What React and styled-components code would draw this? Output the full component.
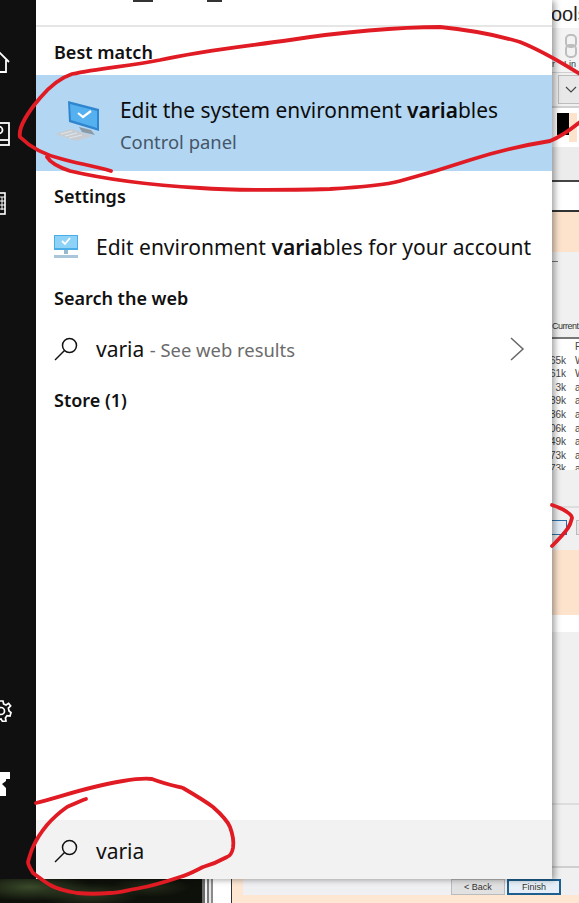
import React from 'react'
import styled, { createGlobalStyle } from 'styled-components'

const GlobalStyle = createGlobalStyle`
  html, body {
    margin: 0;
    padding: 0;
    background: #fff;
    overflow: hidden;
  }

  * {
    box-sizing: border-box;
  }
`

const Screen = styled.div`
  position: relative;
  width: 579px;
  height: 903px;
  overflow: hidden;
  font-family: 'Noto Sans', 'Open Sans', sans-serif;
  display: flex;
  flex-direction: column;
`

const Main = styled.div`
  display: flex;
  height: 879px;
`

const Sidebar = styled.nav`
  width: 36px;
  flex: none;
  background: #101010;
  display: flex;
  flex-direction: column;
  overflow: hidden;
  padding-top: 50px;
`

const RailIcon = styled.svg`
  display: block;
  margin-left: ${(props) => props.$left || 0}px;
  margin-top: ${(props) => props.$top || 0}px;
  flex: none;
`

const Panel = styled.section`
  width: 516px;
  flex: none;
  background: #fff;
  display: flex;
  flex-direction: column;
  box-shadow: 3px 1px 6px rgba(0, 0, 0, 0.35);
  z-index: 1;
`

const TopStrip = styled.div`
  height: 27px;
  flex: none;
  border-bottom: 2px solid #e6e6e6;
  display: flex;
  align-items: flex-start;
  padding-left: 97px;
  gap: 54px;
  overflow: hidden;
`

const TabStub = styled.span`
  display: block;
  width: ${(props) => props.$width}px;
  height: 2px;
  background: #333;
`

const Results = styled.div`
  flex: 1;
  display: flex;
  flex-direction: column;
`

const Heading = styled.h2`
  margin: 0;
  height: ${(props) => props.$height}px;
  padding: ${(props) => props.$pad}px 0 0 18px;
  font-size: 18px;
  line-height: 24px;
  font-weight: 600;
  color: #111;
`

const BestRow = styled.div`
  height: 96px;
  background: #b3d6f2;
  display: flex;
  align-items: center;
  padding-left: 18px;
  gap: 10px;
`

const BestText = styled.div`
  display: flex;
  flex-direction: column;
  gap: 5px;
  padding-top: 2px;
`

const BestTitle = styled.div`
  font-size: 20.9px;
  line-height: 30px;
  color: #0c0c0c;
  white-space: nowrap;
`

const BestSub = styled.div`
  font-size: 18.4px;
  line-height: 24px;
  color: #44566a;
`

const Row = styled.div`
  height: ${(props) => props.$height}px;
  display: flex;
  align-items: center;
  padding: 0 27px 0 18px;
  gap: 18px;
`

const RowLabel = styled.div`
  flex: 1;
  font-size: 21px;
  color: #111;
  white-space: nowrap;
`

const Hint = styled.span`
  font-size: 18.4px;
  color: #6b6b6b;
`

const SearchBox = styled.div`
  height: 59px;
  flex: none;
  background: #f2f2f2;
  display: flex;
  align-items: center;
  padding: 2px 0 0 18px;
  gap: 18px;
`

const SearchText = styled.span`
  font-size: 21px;
  color: #111;
`

const Backdrop = styled.aside`
  width: 27px;
  flex: none;
  display: flex;
  flex-direction: column;
  overflow: hidden;
  background: #f0f0f0;
  font-family: 'Liberation Sans', sans-serif;
`

const Band = styled.div`
  height: ${(props) => props.$height}px;
  flex: none;
  background: ${(props) => props.$bg || 'transparent'};
  border-bottom: ${(props) => (props.$line ? `${props.$weight || 2}px solid ${props.$line}` : 'none')};
  display: flex;
  align-items: ${(props) => props.$align || 'center'};
  overflow: hidden;
`

const WindowTitle = styled.span`
  font-size: 20px;
  color: #222;
  margin-left: -1px;
  white-space: nowrap;
`

const ToolGroup = styled.div`
  width: 27px;
  height: 100%;
  display: flex;
  flex-direction: column;
  padding-top: 6px;
`

const ChainIcon = styled.svg`
  display: block;
  margin-left: 12px;
  flex: none;
`

const ToolLabels = styled.div`
  display: flex;
  gap: 9px;
  margin-top: 1px;
  font-size: 9px;
  line-height: 11px;
  color: #333;
  white-space: nowrap;
`

const ChevronBox = styled.div`
  width: 30px;
  height: 29px;
  margin-left: 6px;
  flex: none;
  background: #e8e8e8;
  border: 1px solid #bdbdbd;
  display: flex;
  align-items: center;
  padding-left: 6px;
`

const Swatch = styled.div`
  width: 12px;
  height: 22px;
  margin: 5px 0 0 5px;
  flex: none;
  background: #000;
`

const SwatchTail = styled.div`
  width: 8px;
  height: 29px;
  margin-top: 5px;
  flex: none;
  background: #fde3cc;
`

const Dash = styled.span`
  display: block;
  width: 6px;
  height: 1px;
  margin-top: 9px;
  background: #777;
`

const ColumnHeader = styled.div`
  height: 21px;
  font-size: 9px;
  line-height: 16px;
  letter-spacing: -0.5px;
  color: #333;
  border-bottom: 2px solid #777;
  white-space: nowrap;
`

const Table = styled.div`
  background: #fff;
  flex: none;
  height: 131px;
  padding-top: 1px;
  overflow: hidden;
`

const TableRow = styled.div`
  height: 13.6px;
  display: grid;
  grid-template-columns: 14px 13px;
  font-size: 10px;
  line-height: 13.6px;
  color: #444;
`

const Size = styled.span`
  display: flex;
  justify-content: flex-end;
  white-space: nowrap;
`

const Cell = styled.span`
  padding-left: 9px;
`

const SelectedButton = styled.div`
  width: 15px;
  height: 15px;
  margin-top: 12px;
  flex: none;
  background: #e3eef8;
  border: 1px solid #2a6ea6;
  border-left: none;
`

const SpareButton = styled.div`
  width: 6px;
  height: 15px;
  margin: 12px 0 0 9px;
  flex: none;
  background: #e4e4e4;
  border: 1px solid #bbb;
`

const Taskstrip = styled.footer`
  height: 24px;
  flex: none;
  display: flex;
`

const Wallpaper = styled.div`
  width: 202px;
  flex: none;
  background:
    radial-gradient(ellipse 60px 14px at 30px 8px, #3a4a2a, transparent),
    radial-gradient(ellipse 50px 12px at 90px 16px, #2c3620, transparent),
    radial-gradient(ellipse 40px 10px at 150px 8px, #232a19, transparent),
    #0e110a;
`

const Rails = styled.div`
  width: 30px;
  flex: none;
  background: linear-gradient(
    90deg,
    #6b6b6b 0 3px,
    #f4f4f4 3px 5px,
    #7a7a7a 5px 7px,
    #e6e6e6 7px 9px,
    #8a8a8a 9px 11px,
    #fff 11px 29px,
    #333 29px
  );
`

const Wizard = styled.div`
  flex: 1;
  background: #fde6d2;
  padding: 0 0 8px 11px;
`

const WizardBar = styled.div`
  height: 16px;
  background: #f0f0f2;
  display: flex;
  align-items: center;
  padding-left: 208px;
  gap: 2px;
  font-family: 'Liberation Sans', sans-serif;
  font-size: 9px;
  color: #333;
`

const WizardButton = styled.div`
  width: ${(props) => props.$width}px;
  height: 16px;
  flex: none;
  display: flex;
  align-items: center;
  justify-content: center;
  background: ${(props) => (props.$primary ? '#e6eff7' : '#e1e1e1')};
  border: ${(props) => (props.$primary ? '2px solid #1d5f8f' : '1px solid #bbb')};
`

const Scribble = styled.svg`
  position: absolute;
  inset: 0;
  z-index: 3;
  pointer-events: none;
`

const Match = styled.strong`
  font-weight: 600;
`

const Magnifier = () => (
  <svg width="24" height="24" viewBox="0 0 24 24" fill="none" stroke="#111" strokeWidth="1.5" style={{ flex: 'none' }}>
    <circle cx="15.5" cy="8.5" r="7" />
    <path d="M10.5 13.5 1 23" />
  </svg>
)

const SystemIcon = () => (
  <svg width="56" height="46" viewBox="0 0 56 46" style={{ flex: 'none' }}>
    <path d="M14 1 45 9V31L15 22Z" fill="#2f86cf" />
    <path d="M16 4 43 11V28L17 20Z" fill="#55b0f0" />
    <path d="M24 13 29 17 37 11" fill="none" stroke="#fff" strokeWidth="2.2" />
    <path d="M25 27 37 30 41 35 28 32Z" fill="#8c9aa6" />
    <path d="M1 34 17 29 39 36 22 41Z" fill="#c6ccd1" />
    <path d="M7 34 18 31M11 36 23 33M15 38 28 35" stroke="#dfe3e6" strokeWidth="1.2" />
  </svg>
)

const SettingsIcon = () => (
  <svg width="24" height="24" viewBox="0 0 24 24" style={{ flex: 'none' }}>
    <rect x="0" y="0" width="24" height="15" fill="#49aee8" />
    <rect x="1" y="1" width="22" height="12" fill="#8ed3f7" />
    <path d="M8 6 11 9 16 3" fill="none" stroke="#fff" strokeWidth="1.8" />
    <rect x="10" y="15" width="4" height="4" fill="#9ab8cc" />
    <rect x="0" y="20" width="24" height="3" fill="#a9c6da" />
  </svg>
)

const rows = [
  { size: '', cell: 'F' },
  { size: '65k', cell: 'W' },
  { size: '61k', cell: 'W' },
  { size: '3k', cell: 'a' },
  { size: '89k', cell: 'a' },
  { size: '36k', cell: 'a' },
  { size: '06k', cell: 'a' },
  { size: '49k', cell: 'a' },
  { size: '73k', cell: 'a' },
  { size: '73k', cell: 'a' }
]

const App = () => (
  <Screen>
    <GlobalStyle />
    <Main>
      <Sidebar>
        <RailIcon $left={-10} width="20" height="24" viewBox="0 0 20 24" fill="none" stroke="#fff" strokeWidth="1.8">
          <path d="M1 12 10 3 19 12M16 10V22H4V10" />
        </RailIcon>
        <RailIcon $left={-12} $top={48} width="22" height="24" viewBox="0 0 22 24" fill="none" stroke="#fff" strokeWidth="1.8">
          <rect x="1" y="1" width="20" height="22" />
          <circle cx="11" cy="8" r="3.5" />
          <path d="M1 18H21" />
        </RailIcon>
        <RailIcon $left={-10} $top={46} width="16" height="24" viewBox="0 0 16 24" fill="none" stroke="#fff" strokeWidth="1.6">
          <rect x="1" y="1" width="14" height="21" />
          <path d="M4 5H15M4 9H15M4 13H15M4 17H15M8 5V18M12 5V18" strokeWidth="1" />
        </RailIcon>
        <RailIcon $left={-10} $top={484} width="22" height="22" viewBox="0 0 22 22" fill="none" stroke="#fff" strokeWidth="1.7">
          <circle cx="11" cy="11" r="3.5" />
          <path d="M9 1H13L13.6 4 16 5 18.6 3.4 20.6 6 18.4 8 19 11 21 12.5 20 16 17 15.6 15.4 18 16 21 12.5 21.4 11 19 8.5 19.4 6 21 3 19 4.4 16 3 13.6 1 13 1 9 4 8.4 5 6 3.4 3.4 6 1.4 8 3.6Z" />
        </RailIcon>
        <RailIcon $left={-8} $top={50} width="18" height="24" viewBox="0 0 18 24" fill="#fff">
          <path d="M0 0H18V7H14V9L10 12 14 16V24H6V18L0 14Z" />
        </RailIcon>
      </Sidebar>
      <Panel>
        <TopStrip>
          <TabStub $width={20} />
          <TabStub $width={15} />
        </TopStrip>
        <Results>
          <Heading $height={48} $pad={13}>Best match</Heading>
          <BestRow>
            <SystemIcon />
            <BestText>
              <BestTitle>Edit the system environment <Match>varia</Match>bles</BestTitle>
              <BestSub>Control panel</BestSub>
            </BestText>
          </BestRow>
          <Heading $height={50} $pad={13}>Settings</Heading>
          <Row $height={52}>
            <SettingsIcon />
            <RowLabel>Edit environment <Match>varia</Match>bles for your account</RowLabel>
          </Row>
          <Heading $height={50} $pad={13}>Search the web</Heading>
          <Row $height={52}>
            <Magnifier />
            <RowLabel>varia <Hint>- See web results</Hint></RowLabel>
            <svg width="16" height="26" viewBox="0 0 16 26" fill="none" stroke="#666" strokeWidth="1.5">
              <path d="M2 2 14 13 2 24" />
            </svg>
          </Row>
          <Heading $height={50} $pad={13}>Store (1)</Heading>
        </Results>
        <SearchBox>
          <Magnifier />
          <SearchText>varia</SearchText>
        </SearchBox>
      </Panel>
      <Backdrop>
        <Band $height={28} $bg="#fff"><WindowTitle>ools</WindowTitle></Band>
        <Band $height={45} $bg="#f3f3f3" $line="#d0d0d0" $weight={1}>
          <ToolGroup>
            <ChainIcon width="14" height="24" viewBox="0 0 14 24" fill="none" stroke="#bdbdbd" strokeWidth="2">
              <rect x="2" y="1" width="10" height="12" rx="4" />
              <rect x="2" y="11" width="10" height="12" rx="4" />
            </ChainIcon>
            <ToolLabels>
              <span>r</span>
              <span>Lin</span>
            </ToolLabels>
          </ToolGroup>
        </Band>
        <Band $height={35} $bg="#f0f0f0" $line="#d0d0d0">
          <ChevronBox>
            <svg width="12" height="8" viewBox="0 0 12 8" fill="none" stroke="#444" strokeWidth="1.1">
              <path d="M1 1 6 6 11 1" />
            </svg>
          </ChevronBox>
        </Band>
        <Band $height={39} $bg="#fff" $align="flex-start">
          <Swatch />
          <SwatchTail />
        </Band>
        <Band $height={35} $bg="#ececec" $line="#444" />
        <Band $height={30} $bg="#fff" $line="#333" />
        <Band $height={40} $bg="#fde3cc" />
        <Band $height={66} $bg="#f0f0f0" $align="flex-start"><Dash /></Band>
        <ColumnHeader>Current</ColumnHeader>
        <Table>
          {rows.map((row, index) => (
            <TableRow key={index}>
              <Size>{row.size}</Size>
              <Cell>{row.cell}</Cell>
            </TableRow>
          ))}
        </Table>
        <Band $height={38} $bg="#f0f0f0" $line="#ddd" />
        <Band $height={42} $bg="#f0f0f0" $align="flex-start">
          <SelectedButton />
          <SpareButton />
        </Band>
        <Band $height={65} $bg="#fde3cc" />
        <Band $height={17} $bg="#fff" />
        <Band $height={173} $bg="#f0f0f0" $line="#ddd" />
        <Band $height={63} $bg="#f0f0f0" $line="#cfcfcf" />
        <Band $height={11} $bg="#f0f0f0" />
      </Backdrop>
    </Main>
    <Taskstrip>
      <Wallpaper />
      <Rails />
      <Wizard>
        <WizardBar>
          <WizardButton $width={54}>&lt; Back</WizardButton>
          <WizardButton $width={54} $primary>Finish</WizardButton>
        </WizardBar>
      </Wizard>
    </Taskstrip>
    <Scribble width="579" height="903" viewBox="0 0 579 903" fill="none" stroke="#e01b24" strokeWidth="3.8" strokeLinecap="round" strokeLinejoin="round">
      <path d="M111 171C95 166 75 163 62 159 45 155 30 147 20 137 18 128 28 112 40 98 50 86 60 78 72 74 100 68 130 66 160 60 200 51 240 47 290 40 340 32 400 27 440 27 470 30 500 36 520 42 545 52 565 65 580 74" />
      <path d="M580 122C570 130 560 137 550 141 525 145 495 152 470 160 440 170 415 177 400 181 385 185 365 187 330 189 290 190 240 191 200 188 150 185 100 178 70 171 58 167 50 162 47 157" />
      <path d="M36 803C60 797 90 786 123 781 135 779 145 778 152 779 165 784 175 786 183 788 195 795 205 801 213 807 222 815 228 822 230 827 233 835 234 842 233 848 232 853 230 856 227 857 218 862 210 865 203 867 195 871 188 875 180 877 165 882 152 886 140 888 128 890 118 893 110 893 98 894 87 894 77 893 65 891 57 889 50 885 42 880 37 876 33 873 30 868 28 865 28 862 30 855 31 851 33 847 37 838 42 831 47 825 53 818 60 812 67 807 74 804 80 801 86 799" />
      <path d="M552 505C558 507 563 509 567 512 570 514 572 516 572 518 571 522 570 525 568 528 564 534 558 540 552 546" />
    </Scribble>
  </Screen>
)

export default App
